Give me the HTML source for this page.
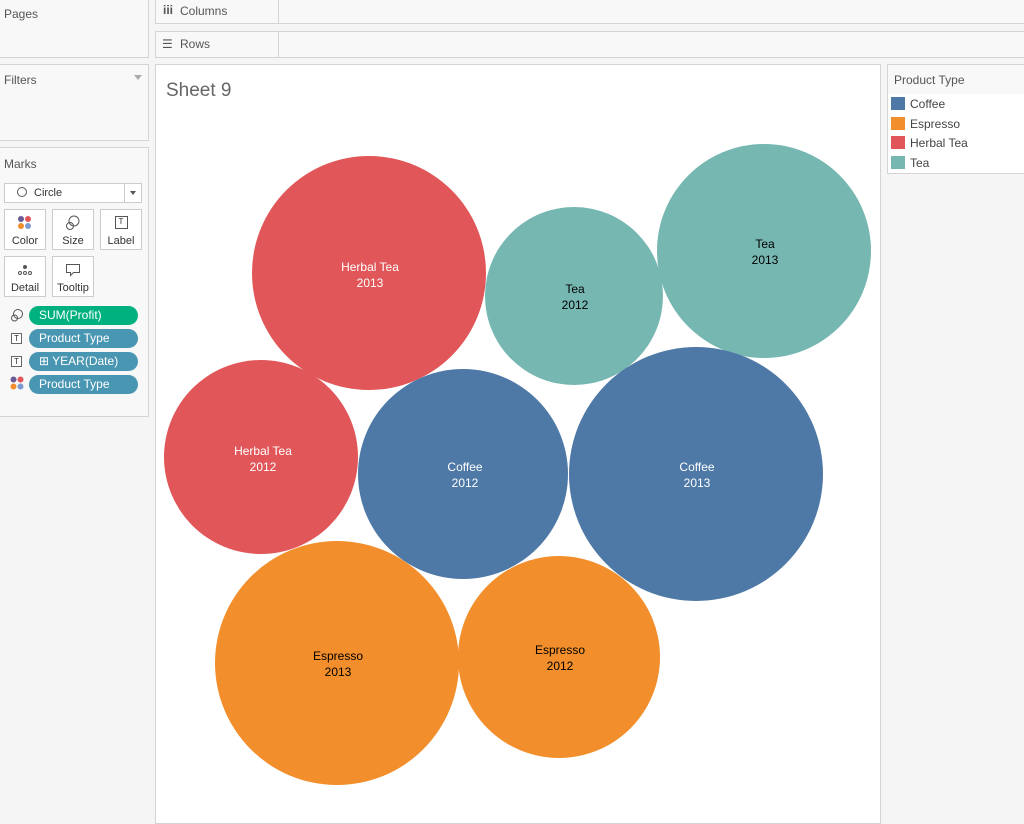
<!DOCTYPE html>
<html><head><style>
body{margin:0;width:1024px;height:820px;background:#f5f5f5;font-family:"Liberation Sans",sans-serif;position:relative;overflow:hidden;font-size:12px;color:#333}
.p{position:absolute;background:#f8f8f8;border:1px solid #d4d4d4;box-sizing:border-box}
.t{position:absolute;left:4px;font-size:12px;color:#555}
.btn{position:absolute;width:42px;height:41px;border:1px solid #ccc;background:#fff;box-sizing:border-box;text-align:center;font-size:11px;color:#333}
.btn span{position:absolute;bottom:2px;left:0;right:0}
.pill{position:absolute;left:29px;width:109px;height:19px;border-radius:10px;background:#4996b2;color:#fff;font-size:12px;line-height:19px;padding-left:10px;box-sizing:border-box}
.ti{position:absolute;left:11px;width:11px;height:11px;border:1px solid #666;box-sizing:border-box;font-size:8px;line-height:9px;text-align:center;background:#fff}
.sw{position:absolute;left:891px;width:14px;height:13px}
.lg{position:absolute;left:910px;font-size:12px;color:#444}
</style></head><body>
<div class="p" style="left:0;top:0;width:149px;height:58px;border-top:none;border-left:none"><div class="t" style="top:7px">Pages</div></div>
<div class="p" style="left:155px;top:-1px;width:870px;height:25px"></div>
<div style="position:absolute;left:278px;top:0;width:1px;height:24px;background:#d4d4d4"></div>
<div style="position:absolute;left:163px;top:3px;font-size:12px;font-weight:bold;color:#555">iii</div>
<div style="position:absolute;left:180px;top:4px;color:#555">Columns</div>
<div class="p" style="left:155px;top:31px;width:870px;height:27px"></div>
<div style="position:absolute;left:278px;top:31px;width:1px;height:27px;background:#d4d4d4"></div>
<div style="position:absolute;left:162px;top:37px;font-size:12px;color:#555">☰</div>
<div style="position:absolute;left:180px;top:37px;color:#555">Rows</div>
<div class="p" style="left:0;top:64px;width:149px;height:77px;border-left:none"><div class="t" style="top:8px">Filters</div><div style="position:absolute;right:6px;top:10px;border:4px solid transparent;border-top:5px solid #aaa"></div></div>
<div class="p" style="left:0;top:147px;width:149px;height:270px;border-left:none">
<div class="t" style="top:9px">Marks</div>
<div style="position:absolute;left:4px;top:35px;width:138px;height:20px;background:#fff;border:1px solid #ccc;box-sizing:border-box"><span style="position:absolute;left:12px;top:3px;width:8px;height:8px;border:1px solid #555;border-radius:50%"></span><span style="position:absolute;left:29px;top:3px;font-size:11px">Circle</span><span style="position:absolute;left:119px;top:0;width:1px;height:18px;background:#ccc"></span><span style="position:absolute;left:125px;top:7px;border:3px solid transparent;border-top:4px solid #555"></span></div>
</div>
<div class="btn" style="left:4px;top:209px"><svg width="16" height="16" style="margin-top:5px"><circle cx="4" cy="4" r="3" fill="#6b5b95"/><circle cx="11" cy="4" r="3" fill="#e15759"/><circle cx="4" cy="11" r="3" fill="#f28e2b"/><circle cx="11" cy="11" r="3" fill="#7d9bd1"/></svg><span>Color</span></div>
<div class="btn" style="left:52px;top:209px"><svg width="16" height="16" style="margin-top:5px" fill="none" stroke="#555"><circle cx="9" cy="6" r="5"/><circle cx="5" cy="11" r="3.5"/></svg><span>Size</span></div>
<div class="btn" style="left:100px;top:209px"><div style="width:11px;height:11px;border:1px solid #555;margin:6px auto 0;font-size:8px;line-height:10px">T</div><span>Label</span></div>
<div class="btn" style="left:4px;top:256px"><svg width="16" height="12" style="margin-top:7px" fill="none" stroke="#555"><circle cx="8" cy="3" r="1.5" fill="#555"/><circle cx="3" cy="9" r="1.5"/><circle cx="8" cy="9" r="1.5"/><circle cx="13" cy="9" r="1.5"/></svg><span>Detail</span></div>
<div class="btn" style="left:52px;top:256px"><svg width="16" height="14" style="margin-top:6px" fill="none" stroke="#555"><path d="M1.5 1.5h13v8h-6l-3 3v-3h-4z"/></svg><span>Tooltip</span></div>
<svg style="position:absolute;left:10px;top:308px" width="14" height="14" fill="none" stroke="#555"><circle cx="8" cy="6" r="4.5"/><circle cx="4.5" cy="10" r="3"/></svg>
<div class="pill" style="top:306px;background:#00b180">SUM(Profit)</div>
<div class="ti" style="top:333px">T</div><div class="pill" style="top:329px">Product Type</div>
<div class="ti" style="top:356px">T</div><div class="pill" style="top:352px">⊞ YEAR(Date)</div>
<svg style="position:absolute;left:10px;top:376px" width="14" height="14"><circle cx="3.5" cy="3.5" r="3" fill="#6b5b95"/><circle cx="10.5" cy="3.5" r="3" fill="#e15759"/><circle cx="3.5" cy="10.5" r="3" fill="#f28e2b"/><circle cx="10.5" cy="10.5" r="3" fill="#7d9bd1"/></svg>
<div class="pill" style="top:375px">Product Type</div>
<div style="position:absolute;left:155px;top:64px;width:726px;height:760px;background:#fff;border:1px solid #d4d4d4;box-sizing:border-box"></div>
<div style="position:absolute;left:166px;top:80px;font-size:19px;color:#666">Sheet 9</div>
<svg style="position:absolute;left:0;top:0" width="1024" height="820" font-family="Liberation Sans, sans-serif" font-size="12" text-anchor="middle">
<circle cx="369" cy="273" r="117" fill="#e15759"/><text x="370" y="271" fill="#fff">Herbal Tea</text><text x="370" y="287" fill="#fff">2013</text>
<circle cx="574" cy="296" r="89" fill="#76b7b2"/><text x="575" y="293">Tea</text><text x="575" y="309">2012</text>
<circle cx="764" cy="251" r="107" fill="#76b7b2"/><text x="765" y="248">Tea</text><text x="765" y="264">2013</text>
<circle cx="261" cy="457" r="97" fill="#e15759"/><text x="263" y="455" fill="#fff">Herbal Tea</text><text x="263" y="471" fill="#fff">2012</text>
<circle cx="463" cy="474" r="105" fill="#4e79a7"/><text x="465" y="471" fill="#fff">Coffee</text><text x="465" y="487" fill="#fff">2012</text>
<circle cx="696" cy="474" r="127" fill="#4e79a7"/><text x="697" y="471" fill="#fff">Coffee</text><text x="697" y="487" fill="#fff">2013</text>
<circle cx="337" cy="663" r="122" fill="#f28e2b"/><text x="338" y="660">Espresso</text><text x="338" y="676">2013</text>
<circle cx="559" cy="657" r="101" fill="#f28e2b"/><text x="560" y="654">Espresso</text><text x="560" y="670">2012</text>
</svg>
<div style="position:absolute;left:887px;top:64px;width:140px;height:110px;background:#fff;border:1px solid #d4d4d4;box-sizing:border-box"><div style="height:29px;background:#f8f8f8"></div></div>
<div style="position:absolute;left:894px;top:73px;font-size:12px;color:#555">Product Type</div>
<div class="sw" style="top:97px;background:#4e79a7"></div><div class="lg" style="top:97px">Coffee</div>
<div class="sw" style="top:117px;background:#f28e2b"></div><div class="lg" style="top:117px">Espresso</div>
<div class="sw" style="top:136px;background:#e15759"></div><div class="lg" style="top:136px">Herbal Tea</div>
<div class="sw" style="top:156px;background:#76b7b2"></div><div class="lg" style="top:156px">Tea</div>
</body></html>
